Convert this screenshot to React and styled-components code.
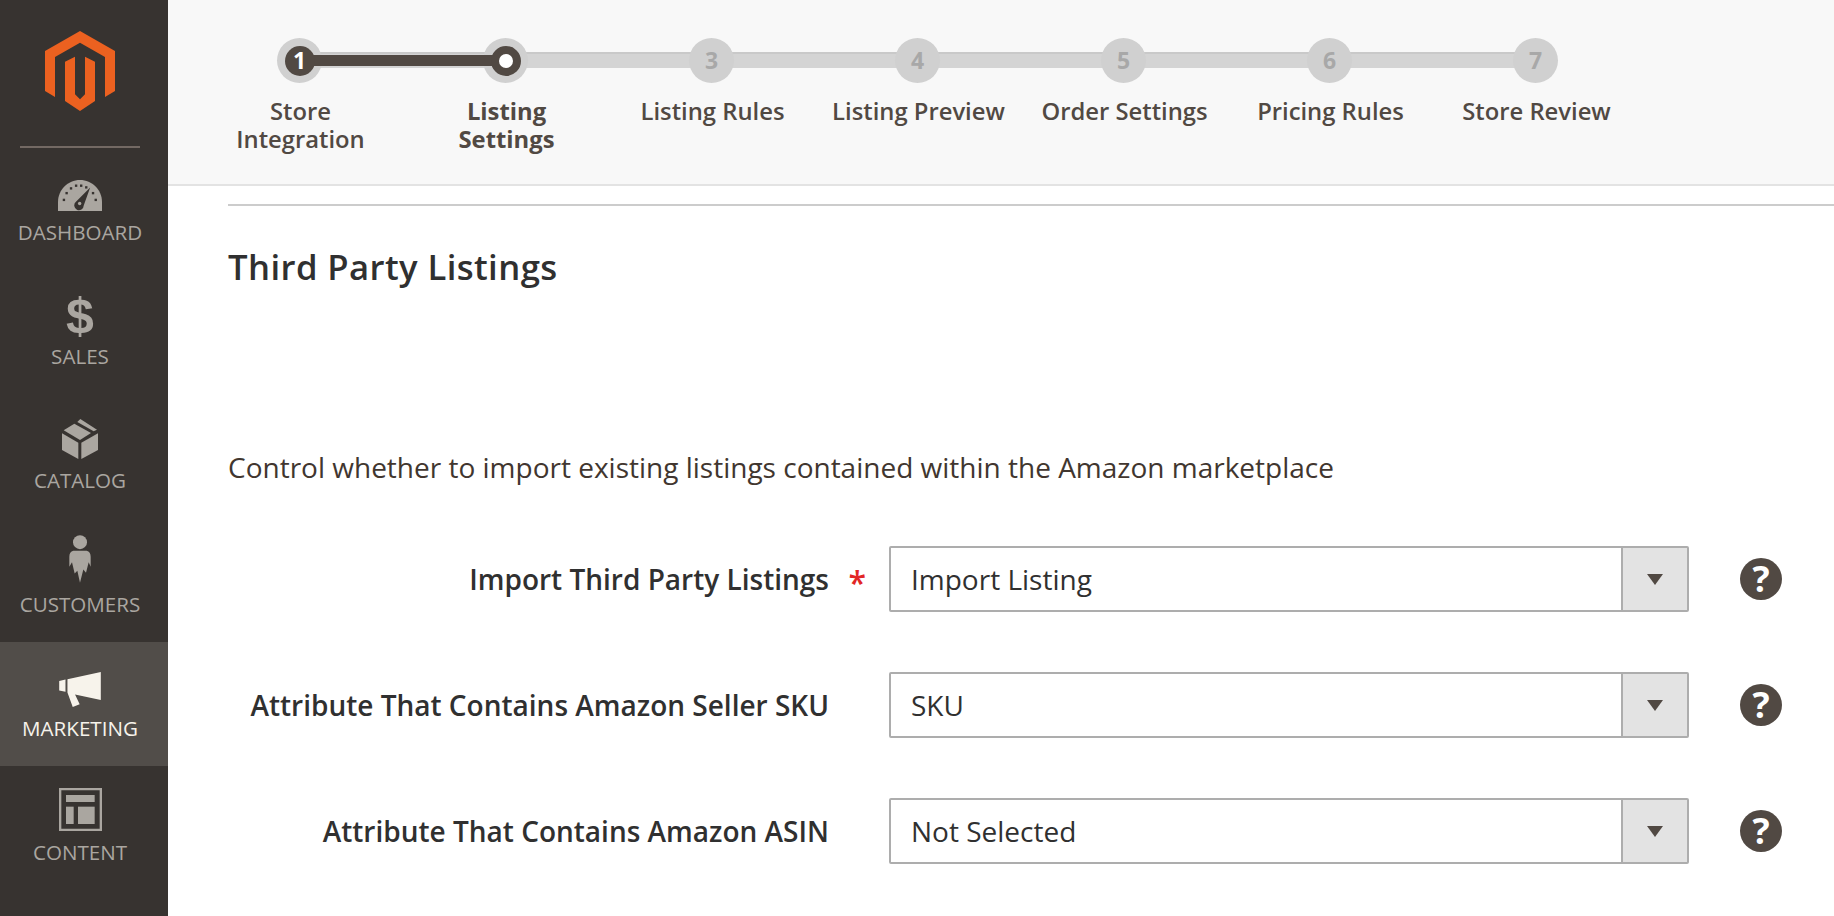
import React from "react";
import styled, { createGlobalStyle } from "styled-components";

const Global = createGlobalStyle`
  html, body { margin: 0; padding: 0; height: 916px; overflow: hidden; background: #fff; }
  body { font-family: "Open Sans", "Liberation Sans", sans-serif; color: #303030; }
`;
const Page = styled.div`display: grid; grid-template-columns: 168px 1fr; height: 916px; overflow: hidden;`;
const Sidebar = styled.nav`background: #373330; height: 916px; display: flex; flex-direction: column;`;
const LogoArea = styled.div`
  height: 146px; display: flex; justify-content: center; align-items: flex-start; position: relative; padding-right: 8px;
  svg { margin-top: 31px; }
  &::after { content: ""; position: absolute; left: 20px; width: 120px; bottom: -2px; height: 2px; background: #736963; }
`;
const NavItem = styled.a`
  height: 124px; display: flex; flex-direction: column; align-items: center; padding-right: 8px;
  background: ${p => (p.$active ? "#514d49" : "transparent")};
  color: ${p => (p.$active ? "#f7f3eb" : "#aaa6a0")};
  font-size: 20.6px; line-height: 28px;
`;
const IconSlot = styled.div`height: 65px; display: flex; align-items: flex-end; justify-content: center; width: 100%; svg { display: block; fill: currentColor; }`;
const DollarGlyph = styled.span`font-family: "Liberation Sans", sans-serif; font-weight: 700; font-size: 50px; line-height: 56px; display: block; margin-bottom: -9px;`;
const NavLabel = styled.span`margin-top: 7px;`;

const Main = styled.main`display: flex; flex-direction: column; min-width: 0;`;
const Header = styled.header`height: 186px; box-sizing: border-box; background: #f8f8f8; border-bottom: 2px solid #e3e3e3; display: flex; padding: 38px 0 0 28.5px;`;
const Step = styled.div`
  width: 206px; display: flex; flex-direction: column; align-items: center; position: relative;
  &:not(:last-child)::before { content: ""; position: absolute; left: 103px; top: 14px; width: 206px; height: 16px; background: #d4d4d4; border-top: 2px solid #c9c9c9; box-sizing: border-box; }
  &:not(:last-child)::after { content: ""; display: ${p => (p.$done ? "block" : "none")}; position: absolute; z-index: 3; left: 103px; top: 17px; width: 206px; height: 11px; background: #514943; }
`;
const Dot = styled.div`
  width: 45px; height: 45px; border-radius: 50%; background: #d0d0d0; position: relative;
  display: flex; align-items: center; justify-content: center; color: #a8a8a8; font-weight: 700; font-size: 23px; line-height: 1;
`;
const InnerDot = styled.div`
  width: 30px; height: 30px; border-radius: 50%; box-sizing: border-box; display: flex; align-items: center; justify-content: center; position: relative; z-index: 4;
  background: ${p => (p.$current ? "#fff" : "#514943")}; color: #fff; font-weight: 700; font-size: 23px; line-height: 1;
  border: ${p => (p.$current ? "8px solid #514943" : "none")};
`;
const StepLabel = styled.div`margin-top: 14px; padding-left: 2px; width: 190px; text-align: center; font-size: 23.8px; line-height: 28px; color: #514943; font-weight: ${p => (p.$current ? 700 : 600)}; white-space: nowrap; display: flex; justify-content: center;`;
const WrappedLabel = styled.span`white-space: normal; max-width: 145px;`;

const Content = styled.section`padding: 18px 0 0 60px;`;
const Rule = styled.hr`margin: 0; border: 0; border-top: 2px solid #cccccc;`;
const Title = styled.h2`margin: 38px 0 0; font-size: 34.7px; line-height: 46px; font-weight: 600; color: #303030; letter-spacing: 0.4px;`;
const Intro = styled.p`margin: 157px 0 0; font-size: 28px; line-height: 40px; color: #41362f;`;
const Fields = styled.div`margin-top: 59px; display: flex; flex-direction: column; gap: 60px;`;
const Row = styled.div`display: grid; grid-template-columns: 601px 799px 42px; height: 66px; align-items: center;`;
const Label = styled.label`font-size: 28px; font-weight: 600; color: #303030; text-align: right; position: relative; white-space: nowrap;`;
const Star = styled.span`position: absolute; right: -37px; top: 3px; color: #e22626; font-size: 32px; font-weight: 600; line-height: 40px;`;
const Select = styled.div`margin-left: 60px; width: 800px; height: 66px; box-sizing: border-box; border: 2px solid #adadad; border-radius: 2px; display: flex; align-items: stretch; font-size: 28px; color: #303030;`;
const SelectValue = styled.div`flex: 1; padding-left: 20px; display: flex; align-items: center;`;
const SelectButton = styled.div`width: 66px; box-sizing: border-box; background: #e3e3e3; border-left: 2px solid #adadad; display: flex; align-items: center; justify-content: center; &::after { content: ""; width: 0; height: 0; border-left: 8px solid transparent; border-right: 8px solid transparent; border-top: 11px solid #514943; }`;
const Help = styled.span`margin-left: 112px; width: 42px; height: 42px; border-radius: 50%; background: #514943; color: #fff; font-weight: 700; font-size: 36px; line-height: 42px; text-align: center; display: block;`;

const Logo = () => (
  <svg width="70" height="80" viewBox="135 93 210 240">
    <path fill="#ec6120" d="M240 93 345 153V273L315 291V171L240 128 165 171V291L135 273V153Z" />
    <path fill="#ec6120" d="M195 185 225 170V283L240 298 255 283V170L285 185V303L240 333 195 303Z" />
  </svg>
);
const Gauge = () => (
  <svg width="44" height="31" viewBox="172 543 130 91">
    <path d="M172 634V608C172 572 201 543 237 543S302 572 302 608V634Z" />
    <g fill="#373330">
      <rect x="186" y="598" width="7" height="7" /><rect x="194" y="578" width="7" height="7" /><rect x="207" y="564" width="7" height="7" />
      <rect x="222" y="556" width="7" height="7" /><rect x="237" y="556" width="7" height="7" /><rect x="252" y="561" width="7" height="7" />
      <rect x="272" y="578" width="7" height="7" /><rect x="280" y="598" width="7" height="7" />
      <path d="M267 565 248 618A14 14 0 1 1 225 607Z" />
    </g>
    <circle cx="236" cy="612" r="5" />
  </svg>
);
const BoxIcon = () => (
  <svg width="36" height="40" viewBox="183 360 108 120">
    <path d="M183 403 232 431V480L183 453Z" /><path d="M291 403 241 431V480L291 453Z" />
    <path d="M188 394 220 374 270 402 237 423Z" /><path d="M229 369 238 360 288 392 278 397Z" />
  </svg>
);
const Person = () => (
  <svg width="22" height="48" viewBox="207 705 66 143">
    <circle cx="240" cy="726" r="21" />
    <path d="M220 752H260C268 754 272 760 272 770V800L266 786 258 818 250 808 240 848 232 812 224 820 216 786 208 800V770C208 760 212 754 220 752Z" />
  </svg>
);
const Megaphone = () => (
  <svg width="42" height="35" viewBox="174 170 126 106">
    <path d="M174 197 193 193V230L174 226Z" /><path d="M199 192 300 170V255L222 238 236 268 215 276 199 232Z" />
  </svg>
);
const ContentIcon = () => (
  <svg width="43" height="43" viewBox="174 516 129 129">
    <path fillRule="evenodd" d="M174 516H303V645H174ZM181 523V638H296V523Z" />
    <rect x="195" y="537" width="86" height="21" /><rect x="195" y="572" width="23" height="52" /><rect x="231" y="572" width="50" height="52" />
  </svg>
);

const navItems = [
  { label: "DASHBOARD", icon: <Gauge /> },
  { label: "SALES", icon: <DollarGlyph>$</DollarGlyph> },
  { label: "CATALOG", icon: <BoxIcon /> },
  { label: "CUSTOMERS", icon: <Person /> },
  { label: "MARKETING", icon: <Megaphone />, active: true },
  { label: "CONTENT", icon: <ContentIcon /> },
];
const steps = [
  { n: 1, label: "Store Integration", wrap: true, done: true },
  { n: 2, label: "Listing Settings", wrap: true, current: true },
  { n: 3, label: "Listing Rules" },
  { n: 4, label: "Listing Preview" },
  { n: 5, label: "Order Settings" },
  { n: 6, label: "Pricing Rules" },
  { n: 7, label: "Store Review" },
];
const fields = [
  { label: "Import Third Party Listings", value: "Import Listing", required: true },
  { label: "Attribute That Contains Amazon Seller SKU", value: "SKU" },
  { label: "Attribute That Contains Amazon ASIN", value: "Not Selected" },
];

export default function App() {
  return (
    <Page>
      <Global />
      <Sidebar>
        <LogoArea><Logo /></LogoArea>
        {navItems.map(i => (
          <NavItem key={i.label} $active={i.active}>
            <IconSlot>{i.icon}</IconSlot>
            <NavLabel>{i.label}</NavLabel>
          </NavItem>
        ))}
      </Sidebar>
      <Main>
        <Header>
          {steps.map(s => (
            <Step key={s.n} $done={s.done}>
              <Dot>
                {s.done && <InnerDot>1</InnerDot>}
                {s.current && <InnerDot $current />}
                {!s.done && !s.current && s.n}
              </Dot>
              <StepLabel $current={s.current}>{s.wrap ? <WrappedLabel>{s.label}</WrappedLabel> : s.label}</StepLabel>
            </Step>
          ))}
        </Header>
        <Content>
          <Rule />
          <Title>Third Party Listings</Title>
          <Intro>Control whether to import existing listings contained within the Amazon marketplace</Intro>
          <Fields>
            {fields.map(f => (
              <Row key={f.label}>
                <Label>{f.label}{f.required && <Star>*</Star>}</Label>
                <Select><SelectValue>{f.value}</SelectValue><SelectButton /></Select>
                <Help>?</Help>
              </Row>
            ))}
          </Fields>
        </Content>
      </Main>
    </Page>
  );
}
